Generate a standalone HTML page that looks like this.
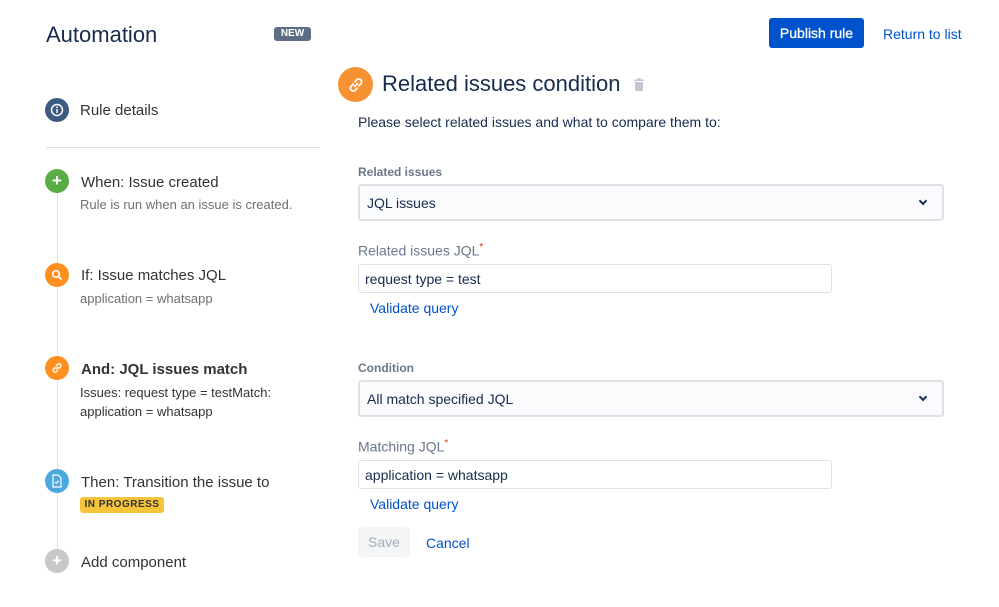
<!DOCTYPE html>
<html><head><meta charset="utf-8"><style>
*{box-sizing:border-box;margin:0;padding:0}
body{width:999px;height:607px;background:#fff;font-family:"Liberation Sans",sans-serif;color:#172b4d;position:relative;overflow:hidden}
.a{position:absolute;white-space:nowrap}
.circ{position:absolute;border-radius:50%;display:flex;align-items:center;justify-content:center}
.t{font-size:15px;color:#333;line-height:18px}
.s{font-size:13px;color:#707070;line-height:19px}
.lbl{font-size:12px;font-weight:bold;color:#6b778c}
.lbl2{font-size:14px;color:#6b778c}
.sel{position:absolute;left:358px;width:586px;height:37px;background:#fafbfc;border:2px solid #dfe1e6;border-radius:3px;font-size:14px;padding:9px 7px;color:#172b4d}
.inp{position:absolute;left:358px;width:474px;height:29px;background:#fff;border:1px solid #dfe1e6;border-radius:3px;font-size:14px;padding:6px 6px;color:#172b4d}
.link{color:#0052cc;font-size:14px}
.chev{position:absolute;right:16px;top:12px;width:6px;height:6px;border-right:2px solid #172b4d;border-bottom:2px solid #172b4d;transform:rotate(45deg)}
</style></head><body>
<div class="a" style="left:46px;top:22px;font-size:22px;color:#172b4d">Automation</div>
<div class="a" style="left:274px;top:27px;width:37px;height:14px;background:#5e6c84;border-radius:3px;color:#fff;font-size:10px;font-weight:bold;text-align:center;line-height:14px">NEW</div>
<div class="a" style="left:769px;top:18px;width:95px;height:30px;background:#0052cc;border-radius:3px;color:#fff;font-size:14px;text-align:center;line-height:30px;-webkit-text-stroke:0.3px #fff">Publish rule</div>
<div class="a link" style="left:883px;top:26px">Return to list</div>

<div class="circ" style="left:45px;top:98px;width:24px;height:24px;background:#3d5a80"><svg width="14" height="14" viewBox="0 0 14 14"><circle cx="7" cy="7" r="5.5" fill="none" stroke="#fff" stroke-width="1.5"/><rect x="6.3" y="6" width="1.4" height="4" fill="#fff"/><circle cx="7" cy="4.3" r=".9" fill="#fff"/></svg></div>
<div class="a t" style="left:80px;top:102px">Rule details</div>
<div class="a" style="left:46px;top:147px;width:274px;height:1px;background:#dfe1e6"></div>
<div class="a" style="left:57px;top:182px;width:1px;height:380px;background:#dfe1e6"></div>

<div class="circ" style="left:45px;top:169px;width:24px;height:24px;background:#5aac44;color:#fff;font-weight:bold;font-size:17px">+</div>
<div class="a t" style="left:81px;top:174px">When: Issue created</div>
<div class="a s" style="left:80px;top:195px">Rule is run when an issue is created.</div>

<div class="circ" style="left:45px;top:263px;width:24px;height:24px;background:#ff8f1f"><svg width="12" height="12" viewBox="0 0 12 12"><circle cx="5" cy="5" r="3.3" fill="none" stroke="#fff" stroke-width="1.6"/><path d="M7.5 7.5L10.5 10.5" stroke="#fff" stroke-width="1.8"/></svg></div>
<div class="a t" style="left:81px;top:267px">If: Issue matches JQL</div>
<div class="a s" style="left:80px;top:289px">application = whatsapp</div>

<div class="circ" style="left:45px;top:356px;width:24px;height:24px;background:#ff8f1f"><svg width="14" height="14" viewBox="0 0 14 14"><path d="M6 8L8 6M5 6.5L3.5 8a2 2 0 0 0 2.8 2.8L7.8 9.3M9 7.5L10.5 6a2 2 0 0 0-2.8-2.8L6.2 4.7" fill="none" stroke="#fff" stroke-width="1.3" stroke-linecap="round"/></svg></div>
<div class="a t" style="left:81px;top:361px;font-weight:bold">And: JQL issues match</div>
<div class="a s" style="left:80px;top:383px;color:#333">Issues: request type = testMatch:</div>
<div class="a s" style="left:80px;top:402px;color:#333">application = whatsapp</div>

<div class="circ" style="left:45px;top:469px;width:24px;height:24px;background:#4ca9e0"><svg width="12" height="14" viewBox="0 0 12 14"><path d="M2 1h5l3 3v9H2z" fill="none" stroke="#fff" stroke-width="1.2"/><path d="M4 8l1.5 1.5L7 7l1 1" fill="none" stroke="#fff" stroke-width="1"/></svg></div>
<div class="a t" style="left:81px;top:474px">Then: Transition the issue to</div>
<div class="a" style="left:80px;top:497px;width:84px;height:16px;background:#f5c43b;border-radius:3px;font-size:10px;letter-spacing:.5px;font-weight:bold;color:#333;text-align:center;line-height:16px">IN PROGRESS</div>

<div class="circ" style="left:45px;top:549px;width:24px;height:24px;background:#c8c8c8;color:#fff;font-weight:bold;font-size:17px">+</div>
<div class="a t" style="left:81px;top:554px">Add component</div>

<div class="circ" style="left:338px;top:67px;width:35px;height:35px;background:#f79232"><svg width="20" height="20" viewBox="0 0 14 14"><path d="M6 8L8 6M5 6.5L3.5 8a2 2 0 0 0 2.8 2.8L7.8 9.3M9 7.5L10.5 6a2 2 0 0 0-2.8-2.8L6.2 4.7" fill="none" stroke="#fff" stroke-width="1.2" stroke-linecap="round"/></svg></div>
<div class="a" style="left:382px;top:71px;font-size:22px;color:#172b4d">Related issues condition</div>
<svg class="a" style="left:634px;top:78px" width="10" height="13" viewBox="0 0 10 13"><rect x="0" y="1.5" width="10" height="1.5" fill="#c1c7d0"/><rect x="3.5" y="0" width="3" height="2" fill="#c1c7d0"/><rect x="1" y="4" width="8" height="9" rx="1" fill="#c1c7d0"/></svg>
<div class="a" style="left:358px;top:114px;font-size:14px">Please select related issues and what to compare them to:</div>

<div class="a lbl" style="left:358px;top:165px">Related issues</div>
<div class="sel" style="top:184px">JQL issues<span class="chev"></span></div>
<div class="a lbl2" style="left:358px;top:242px">Related issues JQL<sup style="color:#de350b;font-size:10px">*</sup></div>
<div class="inp" style="top:264px">request type = test</div>
<div class="a link" style="left:370px;top:300px">Validate query</div>

<div class="a lbl" style="left:358px;top:361px">Condition</div>
<div class="sel" style="top:380px">All match specified JQL<span class="chev"></span></div>
<div class="a lbl2" style="left:358px;top:438px">Matching JQL<sup style="color:#de350b;font-size:10px">*</sup></div>
<div class="inp" style="top:460px">application = whatsapp</div>
<div class="a link" style="left:370px;top:496px">Validate query</div>
<div class="a" style="left:358px;top:527px;width:52px;height:30px;background:#f4f5f7;border-radius:3px;color:#a5adba;font-size:14px;text-align:center;line-height:30px">Save</div>
<div class="a link" style="left:426px;top:535px">Cancel</div>
</body></html>
